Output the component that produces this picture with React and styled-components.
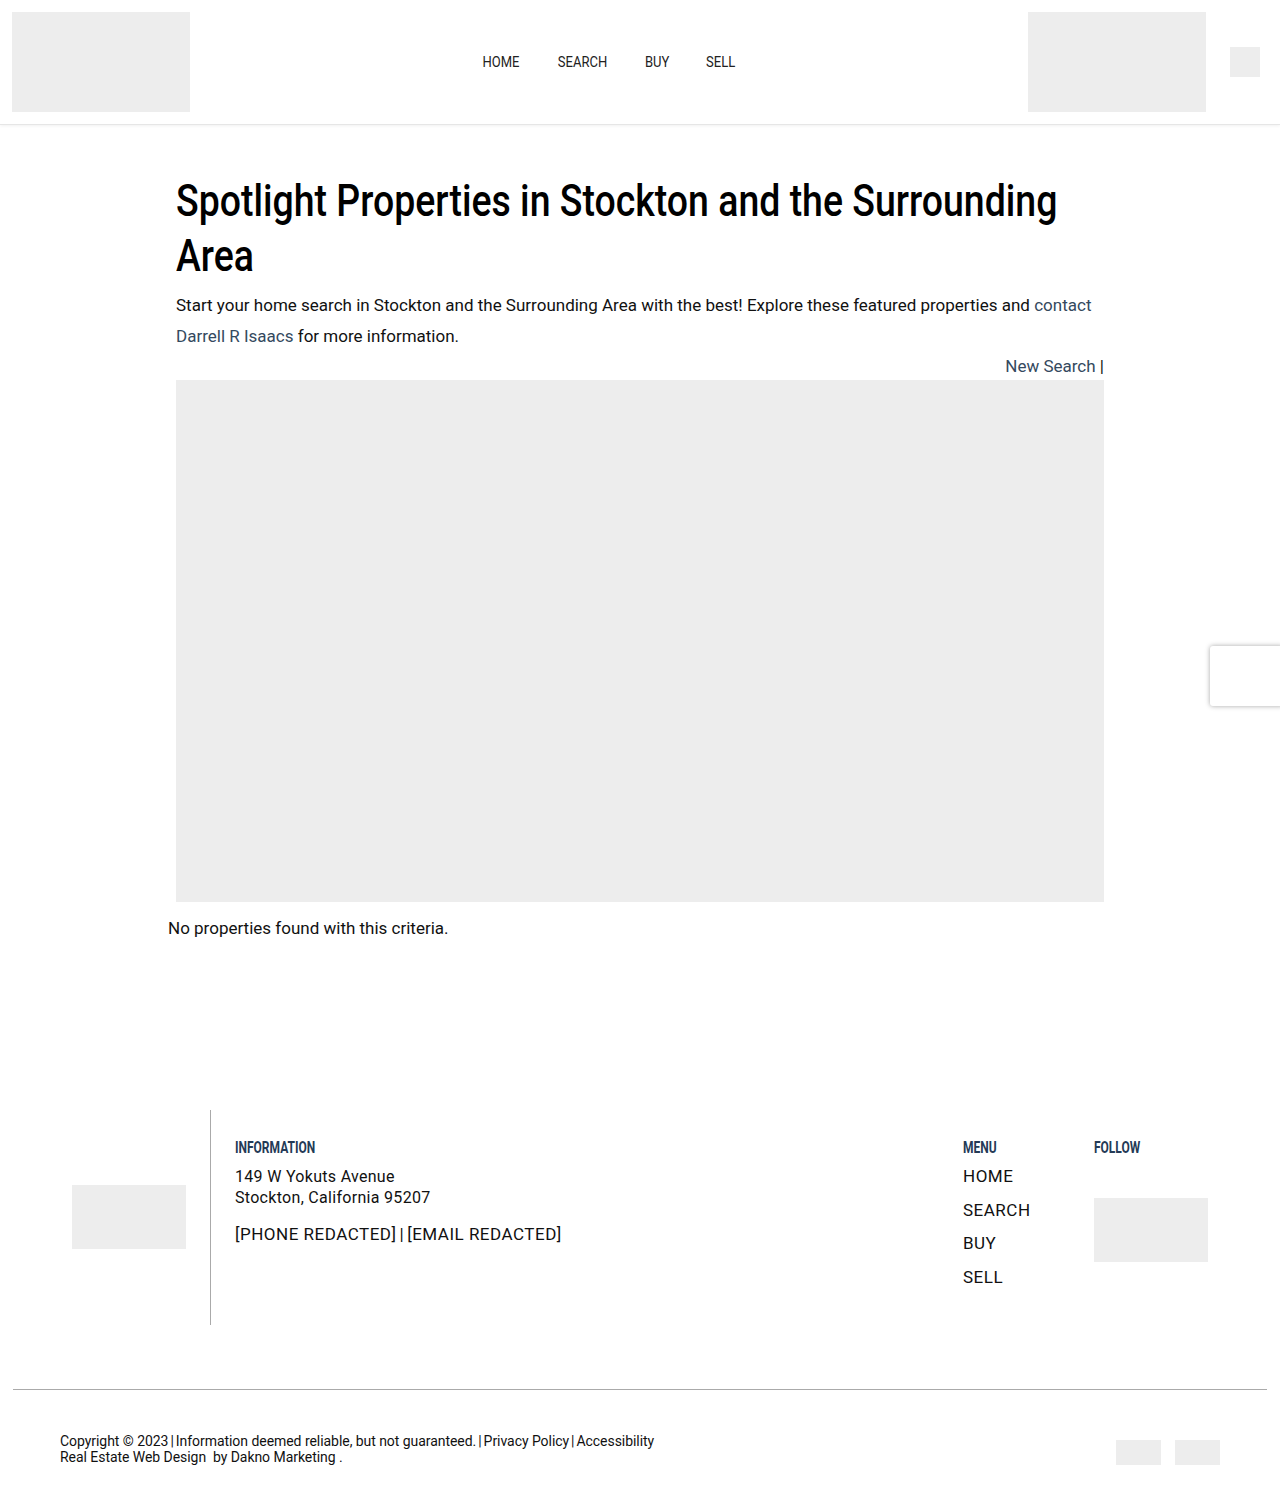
import React from "react";
import styled, { createGlobalStyle } from "styled-components";

const GlobalStyle = createGlobalStyle`
  html, body { margin: 0; padding: 0; background: #fff; }
  body {
    font-family: Roboto, "Liberation Sans", sans-serif;
    color: #111;
    -webkit-font-smoothing: antialiased;
  }
  * { box-sizing: border-box; }
  a { text-decoration: none; }
`;

const TITLE_SCALE = 0.832;

const Page = styled.div`
  position: relative;
  min-height: 1511px;
  display: flex;
  flex-direction: column;
`;

const Header = styled.header`
  display: flex;
  align-items: center;
  height: 125px;
  padding: 12px 20px 12px 12px;
  border-bottom: 1px solid #e6e6e6;
  box-shadow: 0 1px 3px rgba(0, 0, 0, 0.06);
`;

const Placeholder = styled.div`
  width: ${(p) => p.$w}px;
  height: ${(p) => p.$h}px;
  background: #ededed;
  flex-shrink: 0;
`;

const Nav = styled.nav`
  flex: 1;
  display: flex;
  justify-content: center;
  gap: 35px;
`;

const NavLink = styled.a`
  display: inline-block;
  font-size: 14px;
  color: #222;
  text-transform: uppercase;
  transform: scaleX(0.93);
`;

const HeaderRight = styled.div`
  display: flex;
  align-items: center;
  gap: 24px;
`;

const Main = styled.main`
  width: 928px;
  margin: 48px auto 0;
`;

const TitleClip = styled.div`
  width: 928px;
  overflow: hidden;
`;

const Title = styled.h1`
  margin: 0;
  width: ${928 / TITLE_SCALE}px;
  transform: scaleX(${TITLE_SCALE});
  transform-origin: left top;
  font-weight: 500;
  font-size: 45px;
  line-height: 55px;
  color: #000;
`;

const Intro = styled.p`
  margin: 7px 0 0;
  font-size: 17px;
  line-height: 31px;
  color: #111;
`;

const TextLink = styled.a`
  color: #34495e;
`;

const SearchRow = styled.div`
  text-align: right;
  font-size: 17px;
  line-height: 28px;
  color: #111;
`;

const Results = styled.div`
  height: 522px;
  background: #ededed;
`;

const Empty = styled.p`
  margin: 14px 0 0 -8px;
  font-size: 17px;
  line-height: 24px;
  color: #111;
`;

const Footer = styled.footer`
  margin-top: 170px;
`;

const FooterRow = styled.div`
  display: flex;
  padding: 0 72px 0 60px;
  height: 215px;
`;

const LogoCol = styled.div`
  width: 151px;
  padding: 0 0 2px 12px;
  border-right: 1px solid #aaa;
  display: flex;
  align-items: center;
`;

const InfoCol = styled.div`
  flex: 1;
  padding: 29px 0 0 24px;
`;

const ColHead = styled.h3`
  margin: 0 0 9px;
  font-weight: 700;
  font-size: 16px;
  line-height: 18px;
  color: #243a56;
  text-transform: uppercase;
  transform: scaleX(0.75);
  transform-origin: left center;
`;

const Address = styled.div`
  font-size: 16px;
  line-height: 21px;
  letter-spacing: 0.3px;
  color: #111;
`;

const Contact = styled.div`
  margin-top: 14px;
  font-size: 17px;
  line-height: 24px;
  letter-spacing: 0.5px;
  color: #111;
`;

const Pipe = styled.span`
  margin: 0 ${(p) => p.$gap || 3}px;
`;

const MenuCol = styled.div`
  width: 131px;
  padding-top: 29px;
`;

const MenuList = styled.div`
  display: flex;
  flex-direction: column;
`;

const MenuLink = styled.a`
  font-size: 17px;
  line-height: 33.7px;
  letter-spacing: 0.5px;
  color: #111;
  margin-top: ${(p) => (p.$first ? "-6px" : "0")};
`;

const FollowCol = styled.div`
  width: 114px;
  padding-top: 29px;
`;

const FollowBox = styled(Placeholder)`
  margin-top: 41px;
`;

const Rule = styled.hr`
  margin: 64px 13px 0;
  border: 0;
  border-top: 1px solid #aaa;
`;

const Bottom = styled.div`
  display: flex;
  justify-content: space-between;
  align-items: flex-start;
  padding: 43px 60px 0;
`;

const Legal = styled.div`
  font-size: 14px;
  line-height: 16px;
  letter-spacing: -0.05px;
  color: #111;
  white-space: nowrap;
`;

const Badges = styled.div`
  display: flex;
  gap: 14px;
  margin-top: 7px;
`;

const Recaptcha = styled.div`
  position: absolute;
  top: 646px;
  right: -4px;
  width: 74px;
  height: 60px;
  background: #fff;
  border-radius: 3px;
  box-shadow: 0 0 5px rgba(0, 0, 0, 0.35);
`;

const navItems = ["Home", "Search", "Buy", "Sell"];

export default function App() {
  return (
    <Page>
      <GlobalStyle />
      <Header>
        <Placeholder $w={178} $h={100} />
        <Nav>
          {navItems.map((n) => (
            <NavLink key={n} href="#">{n}</NavLink>
          ))}
        </Nav>
        <HeaderRight>
          <Placeholder $w={178} $h={100} />
          <Placeholder $w={30} $h={30} />
        </HeaderRight>
      </Header>

      <Main>
        <TitleClip>
          <Title>Spotlight Properties in Stockton and the Surrounding Area</Title>
        </TitleClip>
        <Intro>
          Start your home search in Stockton and the Surrounding Area with the best! Explore these featured
          properties and <TextLink href="#">contact</TextLink> <TextLink href="#">Darrell R Isaacs</TextLink> for
          more information.
        </Intro>
        <SearchRow>
          <TextLink href="#">New Search</TextLink> |
        </SearchRow>
        <Results />
        <Empty>No properties found with this criteria.</Empty>
      </Main>

      <Footer>
        <FooterRow>
          <LogoCol>
            <Placeholder $w={114} $h={64} />
          </LogoCol>
          <InfoCol>
            <ColHead>Information</ColHead>
            <Address>
              149 W Yokuts Avenue
              <br />
              Stockton, California 95207
            </Address>
            <Contact>
              [PHONE REDACTED]<Pipe>|</Pipe>[EMAIL REDACTED]
            </Contact>
          </InfoCol>
          <MenuCol>
            <ColHead>Menu</ColHead>
            <MenuList>
              {navItems.map((n, i) => (
                <MenuLink key={n} href="#" $first={i === 0}>
                  {n.toUpperCase()}
                </MenuLink>
              ))}
            </MenuList>
          </MenuCol>
          <FollowCol>
            <ColHead>Follow</ColHead>
            <FollowBox $w={114} $h={64} />
          </FollowCol>
        </FooterRow>
        <Rule />
        <Bottom>
          <Legal>
            Copyright © 2023<Pipe $gap={2}>|</Pipe>Information deemed reliable, but not guaranteed.
            <Pipe $gap={2}>|</Pipe>Privacy Policy<Pipe $gap={2}>|</Pipe>Accessibility
            <br />
            Real Estate Web Design&nbsp;&nbsp;by Dakno Marketing .
          </Legal>
          <Badges>
            <Placeholder $w={45} $h={25} />
            <Placeholder $w={45} $h={25} />
          </Badges>
        </Bottom>
      </Footer>
      <Recaptcha />
    </Page>
  );
}
